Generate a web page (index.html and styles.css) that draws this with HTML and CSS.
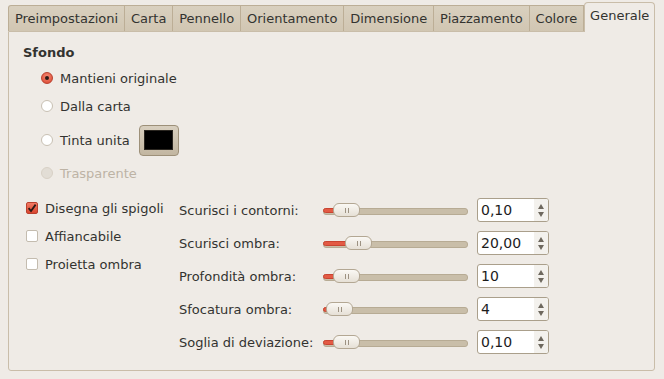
FILE: index.html
```html
<!DOCTYPE html>
<html lang="it">
<head>
    <meta charset="UTF-8">
    <title>Generale</title>
    <link rel="stylesheet" href="styles.css">
</head>
<body>
    <div class="notebook">
        <div class="tabs">
            <div class="tab first">Preimpostazioni</div>
            <div class="tab">Carta</div>
            <div class="tab">Pennello</div>
            <div class="tab">Orientamento</div>
            <div class="tab">Dimensione</div>
            <div class="tab">Piazzamento</div>
            <div class="tab">Colore</div>
            <div class="tab active">Generale</div>
        </div>

        <div class="panel">
            <div class="section-title">Sfondo</div>
            <div class="radio-list">
                <div class="option"><span class="radio checked"></span>Mantieni originale</div>
                <div class="option"><span class="radio"></span>Dalla carta</div>
                <div class="option color-row">
                    <span class="radio"></span>Tinta unita
                    <span class="color-button"><span class="swatch"></span></span>
                </div>
                <div class="option disabled"><span class="radio"></span>Trasparente</div>
            </div>

            <div class="lower">
                <div class="checks">
                    <div class="option"><span class="check checked">
                        <svg width="12" height="12" viewBox="0 0 12 12"><path d="M2.6 6.2 L5 9 L9.6 2.6" fill="none" stroke="#2a1a16" stroke-width="1.8"/></svg>
                    </span>Disegna gli spigoli</div>
                    <div class="option"><span class="check"></span>Affiancabile</div>
                    <div class="option"><span class="check"></span>Proietta ombra</div>
                </div>

                <div class="adjust">
                    <div class="adjust-row">
                        <span class="adjust-label">Scurisci i contorni:</span>
                        <div class="slider"><span class="fill" style="width:13px"></span><span class="thumb" style="left:10px"></span></div>
                        <div class="spin"><span class="spin-value">0,10</span><span class="spin-arrows"><i class="up"></i><i class="down"></i></span></div>
                    </div>
                    <div class="adjust-row">
                        <span class="adjust-label">Scurisci ombra:</span>
                        <div class="slider"><span class="fill" style="width:25px"></span><span class="thumb" style="left:22px"></span></div>
                        <div class="spin"><span class="spin-value">20,00</span><span class="spin-arrows"><i class="up"></i><i class="down"></i></span></div>
                    </div>
                    <div class="adjust-row">
                        <span class="adjust-label">Profondità ombra:</span>
                        <div class="slider"><span class="fill" style="width:13px"></span><span class="thumb" style="left:10px"></span></div>
                        <div class="spin"><span class="spin-value">10</span><span class="spin-arrows"><i class="up"></i><i class="down"></i></span></div>
                    </div>
                    <div class="adjust-row">
                        <span class="adjust-label">Sfocatura ombra:</span>
                        <div class="slider"><span class="fill" style="width:6px"></span><span class="thumb" style="left:3px"></span></div>
                        <div class="spin"><span class="spin-value">4</span><span class="spin-arrows"><i class="up"></i><i class="down"></i></span></div>
                    </div>
                    <div class="adjust-row">
                        <span class="adjust-label">Soglia di deviazione:</span>
                        <div class="slider"><span class="fill" style="width:13px"></span><span class="thumb" style="left:10px"></span></div>
                        <div class="spin"><span class="spin-value">0,10</span><span class="spin-arrows"><i class="up"></i><i class="down"></i></span></div>
                    </div>
                </div>
            </div>
        </div>
    </div>
</body>
</html>
```

FILE: styles.css
```css
:root {
    --bg: #efebe6;
    --tab-bg: #d6ccba;
    --tab-border: #bcae96;
    --panel-border: #c9bda9;
    --text: #333330;
    --red: #e35a44;
    --red-dark: #b9402e;
}

* {
    box-sizing: border-box;
    margin: 0;
    padding: 0;
}

body {
    background-color: var(--bg);
    font-family: "DejaVu Sans", sans-serif;
    font-size: 13px;
    color: var(--text);
}

.notebook {
    padding: 2px 9px 0 8px;
}

/* tab strip */
.tabs {
    display: flex;
    align-items: flex-end;
    height: 29px;
}

.tab {
    flex: none;
    height: 26px;
    line-height: 26px;
    padding: 0 5.9px;
    background: linear-gradient(#d9d0bf, #d1c6b2);
    border-top: 1px solid var(--tab-border);
    border-right: 1px solid var(--tab-border);
    white-space: nowrap;
}

.tab.first {
    border-left: 1px solid var(--tab-border);
    border-top-left-radius: 3px;
}

.tab.active {
    flex: 1;
    height: 30px;
    line-height: 25px;
    margin-bottom: -1px;
    padding: 0 5px;
    text-align: center;
    background: var(--bg);
    border: 1px solid var(--panel-border);
    border-bottom: none;
    border-radius: 4px 4px 0 0;
    position: relative;
    z-index: 1;
}

/* page */
.panel {
    height: 340px;
    border: 1px solid var(--panel-border);
    border-radius: 0 0 3px 3px;
    padding: 13px 0 0 14px;
}

.section-title {
    font-weight: bold;
    height: 16px;
    line-height: 16px;
}

.radio-list {
    display: flex;
    flex-direction: column;
    gap: 4px;
    padding-left: 18px;
    margin-top: 5px;
}

.option {
    display: flex;
    align-items: center;
    height: 24px;
    white-space: nowrap;
}

.option.color-row {
    height: 32px;
    margin-top: 2px;
    margin-bottom: 1px;
}

.option.disabled {
    color: #bdb3a5;
}

.radio {
    width: 12px;
    height: 12px;
    border-radius: 50%;
    border: 1px solid #c8c0b3;
    background: #ffffff;
    margin-right: 7px;
    flex: none;
    display: flex;
    align-items: center;
    justify-content: center;
}

.radio.checked {
    background: radial-gradient(circle at 50% 35%, #f58a74, #d9432d);
    border-color: var(--red-dark);
}

.radio.checked::after {
    content: "";
    width: 4px;
    height: 4px;
    border-radius: 50%;
    background: #2b1a17;
}

.disabled .radio {
    background: #e2ddd5;
    border-color: #d8d1c6;
}

.color-button {
    display: flex;
    align-items: center;
    justify-content: center;
    width: 40px;
    height: 31px;
    margin-left: 9px;
    border: 1px solid #9d9079;
    border-radius: 4px;
    background: linear-gradient(#d8cfbf, #c2b6a1);
}

.swatch {
    width: 29px;
    height: 20px;
    background: #000000;
    border: 1px solid #2a2620;
}

/* bottom part */
.lower {
    display: flex;
    margin-top: 11px;
}

.checks {
    width: 156px;
    padding-left: 3px;
    display: flex;
    flex-direction: column;
    gap: 4px;
}

.check {
    width: 12px;
    height: 12px;
    border: 1px solid #c4bcaf;
    border-radius: 2px;
    background: #ffffff;
    margin-right: 7px;
    flex: none;
    display: flex;
}

.check svg {
    margin: -1px;
}

.check.checked {
    background: linear-gradient(#f27a64, #da4630);
    border-color: var(--red-dark);
}

.adjust {
    display: flex;
    flex-direction: column;
    gap: 5px;
}

.adjust-row {
    display: flex;
    align-items: center;
    height: 28px;
}

.adjust-label {
    width: 144px;
    white-space: nowrap;
}

.slider {
    position: relative;
    width: 145px;
    height: 14px;
}

.slider::before {
    content: "";
    position: absolute;
    left: 0;
    right: 0;
    top: 5px;
    height: 5px;
    border-radius: 3px;
    background: #c9bea9;
    border: 1px solid #b7ab94;
}

.fill {
    position: absolute;
    left: 0;
    top: 5px;
    height: 5px;
    border-radius: 3px 0 0 3px;
    background: var(--red);
    border: 1px solid #c94431;
}

.thumb {
    position: absolute;
    top: 0;
    width: 27px;
    height: 14px;
    border-radius: 6px;
    border: 1px solid #b3a793;
    background: linear-gradient(#faf8f4, #e6e0d6);
}

.thumb::before,
.thumb::after {
    content: "";
    position: absolute;
    top: 4px;
    width: 1px;
    height: 5px;
    background: #9d9282;
}

.thumb::before {
    left: 11px;
}

.thumb::after {
    left: 14px;
}

.spin {
    display: flex;
    width: 72px;
    height: 24px;
    margin-left: 9px;
    border: 1px solid #aa9f8b;
    border-radius: 3px;
    background: #ffffff;
    overflow: hidden;
}

.spin-value {
    flex: 1;
    line-height: 22px;
    padding-left: 3px;
    font-size: 14px;
    color: #1c1c1c;
}

.spin-arrows {
    width: 14px;
    background: #f3f1ed;
    display: flex;
    flex-direction: column;
    align-items: center;
    justify-content: space-around;
    padding: 3px 0;
}

.spin-arrows i {
    width: 0;
    height: 0;
    border-left: 3px solid transparent;
    border-right: 3px solid transparent;
}

.spin-arrows .up {
    border-bottom: 5px solid #6e685e;
}

.spin-arrows .down {
    border-top: 5px solid #6e685e;
}
```
